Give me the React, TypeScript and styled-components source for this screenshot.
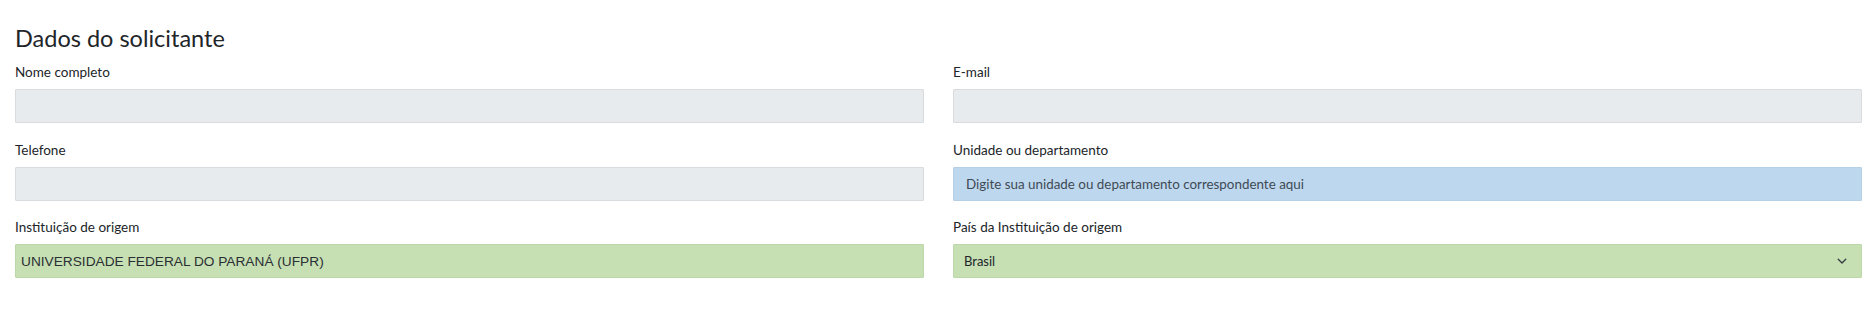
import React from "react";
import styled, { createGlobalStyle } from "styled-components";

const Global = createGlobalStyle`
  html, body { margin: 0; padding: 0; background: #ffffff; }
  body { font-family: "Lato", "Open Sans", sans-serif; color: #212529; }
  * { box-sizing: border-box; }
`;

const Page = styled.div`
  width: 1875px;
  padding: 23px 13px 0 15px;
`;

const Title = styled.h3`
  margin: 0 0 8px 0;
  font-family: "Lato", sans-serif;
  font-weight: 400;
  font-size: 23.5px;
  line-height: 30px;
  color: #212529;
`;

const Grid = styled.div`
  display: grid;
  grid-template-columns: 1fr 1fr;
  column-gap: 29px;
  row-gap: 15.5px;
`;

const Field = styled.div`
  display: flex;
  flex-direction: column;
`;

const Label = styled.label`
  font-family: "Lato", sans-serif;
  font-size: 13.5px;
  line-height: 20px;
  height: 21px;
  padding-top: 1px;
  margin-bottom: 7px;
  color: #212529;
`;

type Tone = "gray" | "blue" | "green";

const tones: Record<Tone, { bg: string; border: string }> = {
  gray: { bg: "#e8ebee", border: "#d9dcdf" },
  blue: { bg: "#bdd7ee", border: "#b4cfe6" },
  green: { bg: "#c6e0b4", border: "#bcd8aa" },
};

const Box = styled.div<{ $tone: Tone; $pad?: number }>`
  height: 34px;
  display: flex;
  align-items: center;
  padding: 0 ${(p) => p.$pad ?? 12}px;
  background: ${(p) => tones[p.$tone].bg};
  border: 1px solid ${(p) => tones[p.$tone].border};
  border-radius: 1px;
  position: relative;
`;

const Placeholder = styled.span`
  font-family: "Lato", sans-serif;
  font-size: 13.4px;
  color: #3f4a55;
`;

const PlainValue = styled.span`
  font-family: "Liberation Sans", Arial, sans-serif;
  font-size: 13.7px;
  color: #2b2f33;
`;

const SelectValue = styled.span`
  font-family: "Lato", sans-serif;
  font-size: 13px;
  color: #212529;
  flex: 1;
`;

const Chevron = styled.svg`
  width: 12px;
  height: 9px;
  margin-right: 3px;
`;

export default function App() {
  return (
    <>
      <Global />
      <Page>
        <Title>Dados do solicitante</Title>
        <Grid>
          <Field>
            <Label>Nome completo</Label>
            <Box $tone="gray" />
          </Field>
          <Field>
            <Label>E-mail</Label>
            <Box $tone="gray" />
          </Field>
          <Field>
            <Label>Telefone</Label>
            <Box $tone="gray" />
          </Field>
          <Field>
            <Label>Unidade ou departamento</Label>
            <Box $tone="blue">
              <Placeholder>Digite sua unidade ou departamento correspondente aqui</Placeholder>
            </Box>
          </Field>
          <Field>
            <Label>Instituição de origem</Label>
            <Box $tone="green" $pad={5}>
              <PlainValue>UNIVERSIDADE FEDERAL DO PARANÁ (UFPR)</PlainValue>
            </Box>
          </Field>
          <Field>
            <Label>País da Instituição de origem</Label>
            <Box $tone="green" $pad={10}>
              <SelectValue>Brasil</SelectValue>
              <Chevron viewBox="0 0 16 12">
                <path d="M3 3l5 5 5-5" fill="none" stroke="#343a40" strokeWidth="1.8" strokeLinecap="round" strokeLinejoin="round" />
              </Chevron>
            </Box>
          </Field>
        </Grid>
      </Page>
    </>
  );
}
